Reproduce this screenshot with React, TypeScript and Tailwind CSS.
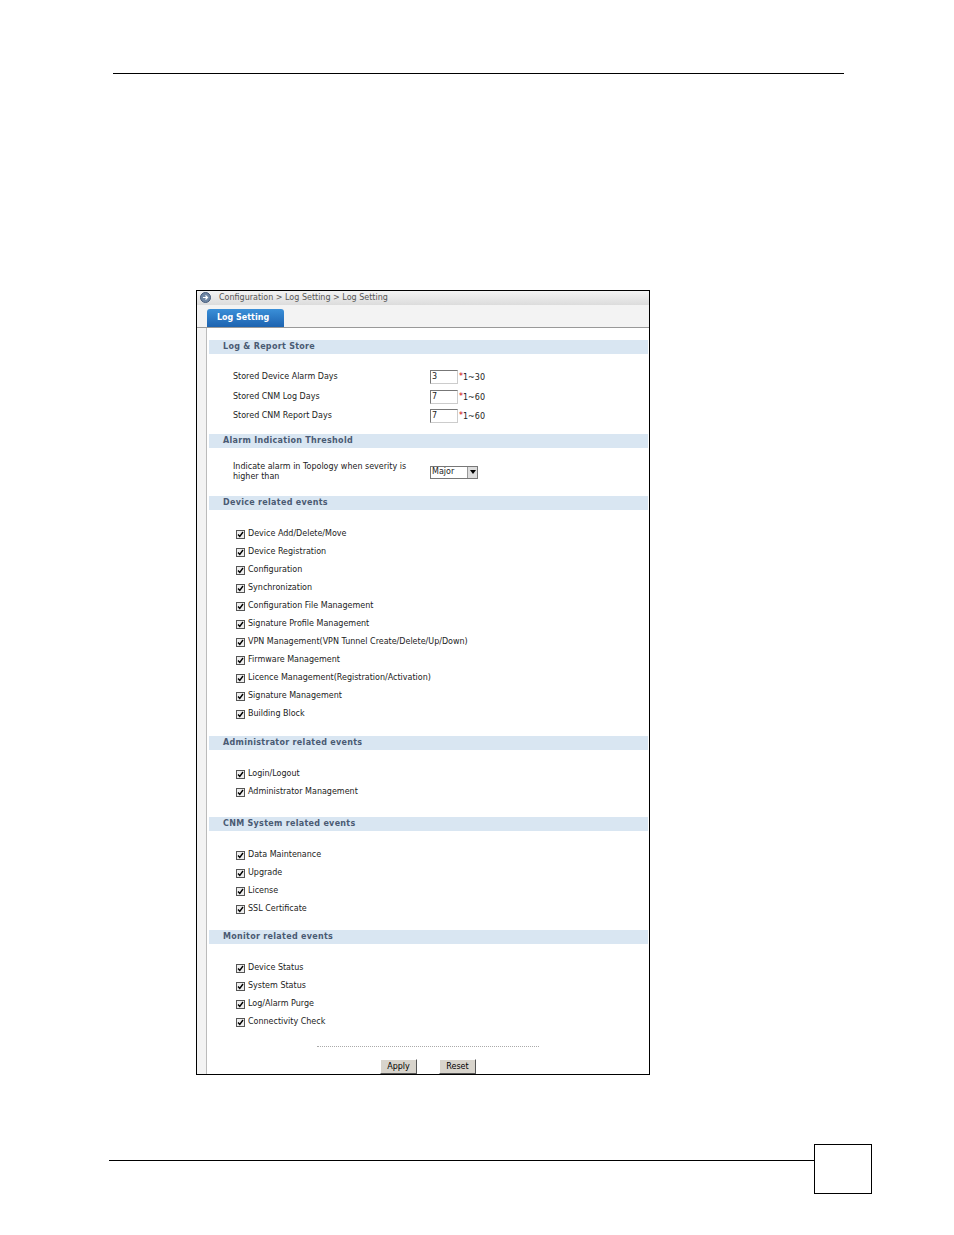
const F = { fontFamily: '"DejaVu Sans", Verdana, sans-serif' };

function Header({ t }: { t: string }) {
  return (
    <div className="h-[14px] bg-[#d9e6f2] flex items-center pl-[14px] text-[8px] font-bold text-[#4a5a73] tracking-[0.3px]">{t}</div>
  );
}
function Check({ t }: { t: string }) {
  return (
    <div className="h-[18px] flex items-center pl-[27px] text-[8px] text-[#222]">
      <span className="w-[9px] h-[9px] border border-[#555] bg-[#eee] mr-[3px] flex items-center justify-center">
        <svg width="7" height="7" viewBox="0 0 7 7"><path d="M1 3.5L2.8 5.5L6 1" stroke="#000" strokeWidth="1.4" fill="none" /></svg>
      </span>
      {t}
    </div>
  );
}
function Input({ v, r }: { v: string; r: string }) {
  return (
    <div className="flex items-center">
      <div className="w-[28px] h-[14px] border border-[#777] border-r-[#ccc] border-b-[#ccc] bg-white text-[8px] pl-[1px] leading-[12px]">{v}</div>
      <span className="text-[#c00] text-[8px] ml-[1px]">*</span>
      <span className="text-[8px] mt-[2px]">{r}</span>
    </div>
  );
}
function Row({ l, v, r }: { l: string; v: string; r: string }) {
  return (
    <div className="h-[19.5px] flex items-center text-[8px] text-[#222]">
      <div className="pl-[24px] w-[221px]">{l}</div>
      <Input v={v} r={r} />
    </div>
  );
}
function Sec({ t, items, pt = 'pt-[15px]', pb = 'pb-[11px]' }: { t: string; items: string[]; pt?: string; pb?: string }) {
  return (
    <div>
      <Header t={t} />
      <div className={pt + ' ' + pb}>
        {items.map((i) => <Check key={i} t={i} />)}
      </div>
    </div>
  );
}

export default function App() {
  return (
    <div className="w-[954px] h-[1235px] bg-white relative" style={F}>
      <div className="pt-[73px] pl-[113px]"><div className="w-[731px] h-px bg-black" /></div>
      <div className="ml-[196px] mt-[216px] w-[454px] h-[785px] border border-black bg-white flex flex-col">
        <div className="h-[16px] bg-gradient-to-b from-[#f4f4f4] to-[#dcdcdc] flex items-center pl-[3px] text-[8px] text-[#555] font-medium">
          <span className="w-[11px] h-[11px] rounded-full bg-[#6f86a3] border border-[#44597a] mr-[8px] flex items-center justify-center">
            <svg width="7" height="7" viewBox="0 0 7 7"><path d="M1 3.5H5M3.5 1.5L5.5 3.5L3.5 5.5" stroke="#fff" strokeWidth="1.2" fill="none" /></svg>
          </span>
          Configuration &gt; Log Setting &gt; Log Setting
        </div>
        <div className="h-[26px] bg-[#f3f3f3] flex items-end pl-[10px] border-b border-[#999]">
          <div className="w-[77px] h-[18px] bg-gradient-to-b from-[#3a8fd8] to-[#1d63b0] rounded-t-[3px] text-white text-[8px] font-bold flex items-center pl-[10px]">Log Setting</div>
        </div>
        <div className="flex flex-1">
          <div className="w-[10px] bg-[#f3f3f3] border-r border-[#bbb]" />
          <div className="flex-1 pt-[12px] pr-[1px] pl-[2px]">
            <Header t="Log & Report Store" />
            <div className="pt-[14px] pb-[8px]">
              <Row l="Stored Device Alarm Days" v="3" r="1~30" />
              <Row l="Stored CNM Log Days" v="7" r="1~60" />
              <Row l="Stored CNM Report Days" v="7" r="1~60" />
            </div>
            <Header t="Alarm Indication Threshold" />
            <div className="h-[48px] flex items-center text-[8px] text-[#222]">
              <div className="pl-[24px] w-[221px] leading-[10px]">Indicate alarm in Topology when severity is higher than</div>
              <div className="w-[48px] h-[13px] border border-[#777] bg-white flex items-center justify-between text-[8px] pl-[1px]">
                Major
                <span className="w-[10px] h-[11px] bg-[#ddd] border-l border-[#999] flex items-center justify-center">
                  <svg width="6" height="4" viewBox="0 0 6 4"><path d="M0 0H6L3 4Z" fill="#000" /></svg>
                </span>
              </div>
            </div>
            <Sec t="Device related events" items={['Device Add/Delete/Move','Device Registration','Configuration','Synchronization','Configuration File Management','Signature Profile Management','VPN Management(VPN Tunnel Create/Delete/Up/Down)','Firmware Management','Licence Management(Registration/Activation)','Signature Management','Building Block']} pt="pt-[15px]" pb="pb-[13px]" />
            <Sec t="Administrator related events" items={['Login/Logout','Administrator Management']} pt="pt-[15px]" pb="pb-[16px]" />
            <Sec t="CNM System related events" items={['Data Maintenance','Upgrade','License','SSL Certificate']} pt="pt-[15px]" pb="pb-[12px]" />
            <Sec t="Monitor related events" items={['Device Status','System Status','Log/Alarm Purge','Connectivity Check']} pt="pt-[15px]" pb="pb-[0px]" />
            <div className="mt-[15px] ml-[108px] w-[222px] border-t border-dotted border-[#aaa]" />
            <div className="flex gap-[22px] ml-[171px] mt-[12px]">
              <div className="w-[37px] h-[15px] bg-[#d8d4cc] border border-[#fff] border-r-[#555] border-b-[#555] text-[8px] flex items-center justify-center">Apply</div>
              <div className="w-[37px] h-[15px] bg-[#d8d4cc] border border-[#fff] border-r-[#555] border-b-[#555] text-[8px] flex items-center justify-center">Reset</div>
            </div>
          </div>
        </div>
      </div>
      <div className="absolute left-[109px] top-[1160px] w-[705px] h-px bg-black" />
      <div className="absolute left-[814px] top-[1144px] w-[58px] h-[50px] border border-black" />
    </div>
  );
}
